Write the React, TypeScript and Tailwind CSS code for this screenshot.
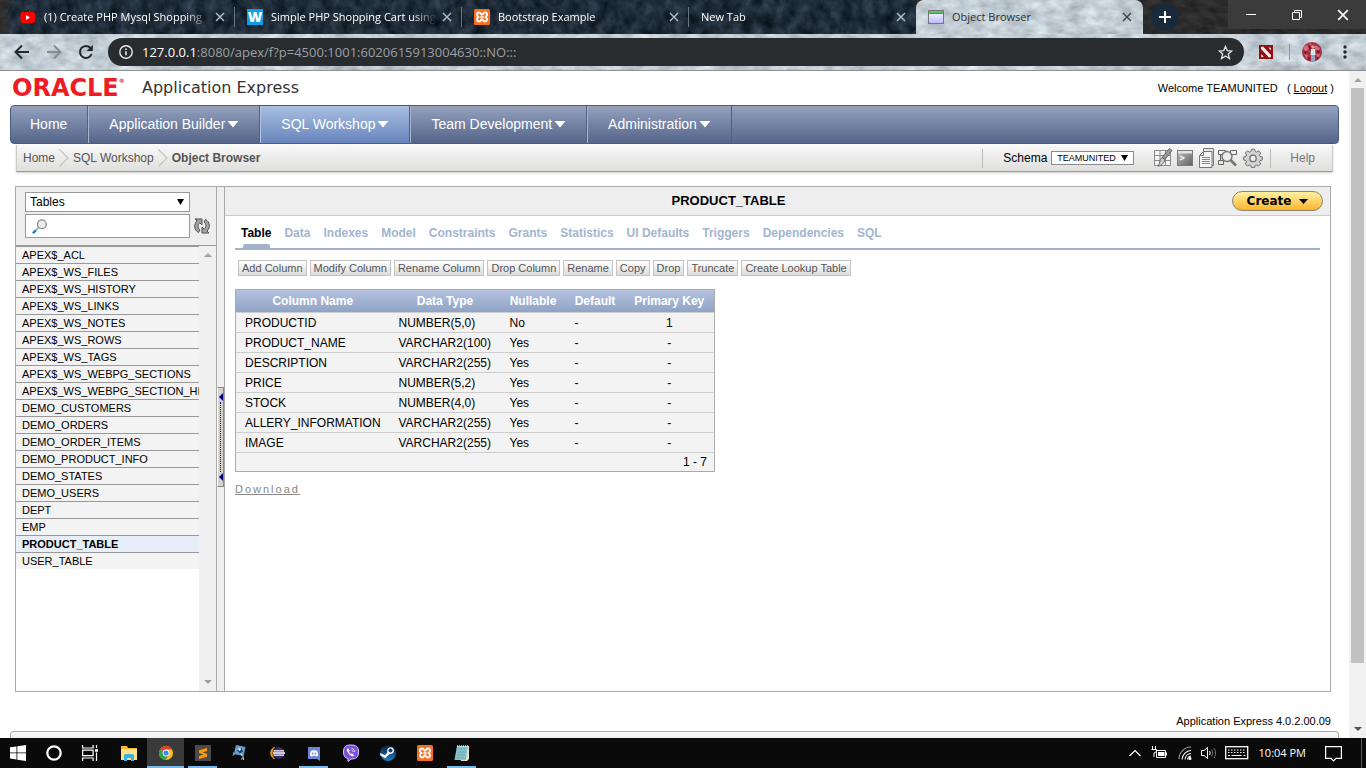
import { useState, type ReactNode } from "react";

type Tone = "stone" | "slate" | "brick";

const toneMatrix: Record<Tone, string> = {
  stone: "0.36 0 0 0 0.58  0.34 0 0 0 0.63  0.32 0 0 0 0.67  0 0 0 0 1",
  slate: "0.26 0 0 0 -0.01  0.28 0 0 0 0.03  0.32 0 0 0 0.06  0 0 0 0 1",
  brick: "0.14 0 0 0 0.1  0.14 0 0 0 0.1  0.14 0 0 0 0.1  0 0 0 0 1",
};

const toneFrequency: Record<Tone, string> = {
  stone: "0.06 0.1",
  slate: "0.09 0.07",
  brick: "0.08 0.15",
};

function Texture({ tone, id }: { tone: Tone; id: string }) {
  return (
    <svg className="pointer-events-none absolute inset-0 h-full w-full" aria-hidden="true">
      <filter id={id} x="0" y="0" width="100%" height="100%" colorInterpolationFilters="sRGB">
        <feTurbulence type="fractalNoise" baseFrequency={toneFrequency[tone]} numOctaves="5" seed="7" />
        <feColorMatrix type="matrix" values={toneMatrix[tone]} />
      </filter>
      <rect width="100%" height="100%" filter={`url(#${id})`} />
    </svg>
  );
}

function Cross({ className, size = 10 }: { className: string; size?: number }) {
  return (
    <svg width={size} height={size} viewBox="0 0 10 10" className={className} aria-hidden="true">
      <path d="M1 1l8 8M9 1l-8 8" stroke="currentColor" strokeWidth="1.4" fill="none" />
    </svg>
  );
}

function XamppIcon() {
  return (
    <svg width="16" height="16" viewBox="0 0 16 16" aria-hidden="true">
      <rect width="16" height="16" rx="1.5" fill="#f37021" />
      <path
        d="M5.6 3.6C3.6 3.2 2.6 4.6 3 6c.2.8.8 1.300 1.400 2C3.600 8.600 3 9.400 3 10.300c0 1.600 1.300 2.300 2.600 2.100C7 12.200 6.900 10.300 8 10.300s1 1.900 2.400 2.100c1.300.2 2.600-.5 2.600-2.100 0-.9-.6-1.700-1.400-2.300.6-.7 1.200-1.200 1.400-2 .4-1.400-.6-2.800-2.600-2.400C9.200 3.900 9.100 5.700 8 5.700S6.800 3.900 5.600 3.600z"
        fill="none"
        stroke="#fff"
        strokeWidth="1.900"
      />
      <path d="M6.300 8h3.400" stroke="#fff" strokeWidth="1.600" />
    </svg>
  );
}

function YoutubeIcon() {
  return (
    <svg width="16" height="16" viewBox="0 0 16 16" aria-hidden="true">
      <rect x="0.500" y="3" width="14.500" height="11" rx="2.500" fill="#f00" />
      <path d="M6 6v5l4-2.500z" fill="#fff" />
    </svg>
  );
}

function WindowIcon() {
  return (
    <svg width="16" height="16" viewBox="0 0 16 16" aria-hidden="true">
      <defs>
        <linearGradient id="winFill" x1="0" y1="0" x2="0" y2="1">
          <stop offset="0" stopColor="#fff" />
          <stop offset="1" stopColor="#b9b7ff" />
        </linearGradient>
      </defs>
      <rect x="0.500" y="1.500" width="15" height="13" fill="url(#winFill)" stroke="#777" />
      <rect x="1" y="2" width="14" height="2" fill="#5fc35f" />
      <path d="M1 4.500h14" stroke="#777" />
    </svg>
  );
}

const browserTabs: { title: string; icon: ReactNode }[] = [
  { title: "(1) Create PHP Mysql Shopping", icon: <YoutubeIcon /> },
  {
    title: "Simple PHP Shopping Cart using",
    icon: (
      <span className="flex size-4 items-center justify-center bg-[#0a9fe8] font-['Open_Sans',sans-serif] text-[14px] leading-4 font-extrabold text-white">
        W
      </span>
    ),
  },
  { title: "Bootstrap Example", icon: <XamppIcon /> },
  { title: "New Tab", icon: null },
];

function TabStrip() {
  return (
    <div className="relative flex h-[34px] shrink-0 bg-[#2a2a2a] pl-2">
      <Texture tone="brick" id="texFrame" />
      <div className="relative flex w-[908px] min-w-0 shrink overflow-hidden rounded-tl-lg rounded-br-lg">
        <Texture tone="slate" id="texTabs" />
        {browserTabs.map((t, i) => (
          <div key={t.title} className="relative flex min-w-0 flex-1 items-center pl-3 text-white">
            {t.icon && <span className="mr-2 shrink-0">{t.icon}</span>}
            <span className="min-w-0 flex-1 overflow-hidden mask-r-from-85% text-[11px] leading-4 font-medium whitespace-nowrap">
              {t.title}
            </span>
            <button aria-label={`Close ${t.title}`} className="mr-[9px] ml-[5px] shrink-0 text-[#b9bfc4]">
              <Cross className="block" />
            </button>
            <span className={i < 3 ? "h-5 w-px bg-[#67727c]" : "h-5 w-px"} />
          </div>
        ))}
      </div>
      <div className="relative flex w-[227px] min-w-0 items-center overflow-hidden rounded-t-lg pl-3 text-[#2b3238]">
        <Texture tone="stone" id="texActive" />
        <span className="relative mr-2 shrink-0">
          <WindowIcon />
        </span>
        <span className="relative min-w-0 flex-1 text-[11px] leading-4 font-medium whitespace-nowrap">Object Browser</span>
        <button aria-label="Close Object Browser" className="relative mr-[11px] shrink-0 text-[#3c4043]">
          <Cross className="block" />
        </button>
      </div>
      <div className="relative flex flex-1 items-start justify-between pl-2">
        <button
          aria-label="New tab"
          className="mt-[3px] flex size-7 items-center justify-center rounded-full bg-[#1b2a3a] text-white"
        >
          <svg width="14" height="14" viewBox="0 0 14 14" aria-hidden="true">
            <path d="M7 1v12M1 7h12" stroke="currentColor" strokeWidth="2" />
          </svg>
        </button>
        <div className="flex h-[29px] bg-[#3b3b3b] text-white">
          <button aria-label="Minimize" className="flex w-[46px] items-center justify-center">
            <svg width="10" height="10" viewBox="0 0 10 10">
              <path d="M0 4.500h10" stroke="currentColor" />
            </svg>
          </button>
          <button aria-label="Restore" className="flex w-[46px] items-center justify-center">
            <svg width="10" height="10" viewBox="0 0 10 10" fill="none" stroke="currentColor">
              <path d="M0.500 2.500h7v7h-7zM2.500 2.500v-2h7v7h-2" />
            </svg>
          </button>
          <button aria-label="Close" className="flex w-[46px] items-center justify-center">
            <Cross className="block" size={12} />
          </button>
        </div>
      </div>
    </div>
  );
}

function AddressBar() {
  return (
    <div className="relative flex h-[37px] shrink-0 items-center border-b border-[#8b9096] pr-[19px] pl-[14px] text-[#23282c]">
      <Texture tone="stone" id="texBar" />
      <div className="relative flex items-center gap-4">
        <button aria-label="Back">
          <svg width="16" height="16" viewBox="0 0 16 16" fill="none" stroke="currentColor" strokeWidth="2">
            <path d="M15 8H2M8 1.500L1.500 8 8 14.500" />
          </svg>
        </button>
        <button aria-label="Forward" className="text-[#858b90]">
          <svg width="16" height="16" viewBox="0 0 16 16" fill="none" stroke="currentColor" strokeWidth="1.800">
            <path d="M1 8h13M8 1.500L14.500 8 8 14.500" />
          </svg>
        </button>
        <button aria-label="Reload">
          <svg width="16" height="16" viewBox="0 0 16 16" fill="none" stroke="currentColor" strokeWidth="2">
            <path d="M13.600 10A6 6 0 1 1 12.500 4" />
            <path d="M14.800 0.800v6.200h-6.200z" fill="currentColor" stroke="none" />
          </svg>
        </button>
      </div>
      <div className="relative ml-[14px] flex h-7 min-w-0 flex-1 items-center rounded-full bg-[#282c2f] px-[11px]">
        <svg width="14" height="14" viewBox="0 0 14 14" fill="none" stroke="#e8eaed" strokeWidth="1.400" aria-hidden="true">
          <circle cx="7" cy="7" r="6.200" />
          <path d="M7 6.200v4M7 3.500v1.500" strokeWidth="1.600" />
        </svg>
        <span className="ml-[9px] flex-1 text-[13px] leading-5 whitespace-nowrap text-[#9aa0a6]">
          <span className="text-white">127.0.0.1</span>:8080/apex/f?p=4500:1001:6020615913004630::NO:::
        </span>
        <button aria-label="Bookmark this page">
          <svg width="15" height="15" viewBox="0 0 16 16" fill="none" stroke="#dfe2e5" strokeWidth="1.400">
            <path d="M8 1.500l1.900 4.500 4.800.4-3.700 3.200 1.200 4.800L8 11.800l-4.200 2.600L5 9.600 1.300 6.400l4.800-.4z" />
          </svg>
        </button>
      </div>
      <svg className="relative ml-[15px]" width="14" height="14" viewBox="0 0 14 14" role="img" aria-label="Extension">
        <rect width="14" height="14" fill="#8f1010" />
        <path d="M2 2l2-.5 8 8.500v2l-2 .5L2 4z" fill="#f4ecec" />
        <path d="M9.500 2.200L12 3l-.5 2.500zM2.300 9l2.500 2.800-2.500.5z" fill="#f4ecec" />
      </svg>
      <span className="relative mr-3 ml-4 h-4 w-px bg-[#8b959c]" />
      <svg className="relative" width="20" height="20" viewBox="0 0 20 20" role="img" aria-label="Profile">
        <defs>
          <clipPath id="avatarClip">
            <circle cx="10" cy="10" r="10" />
          </clipPath>
        </defs>
        <g clipPath="url(#avatarClip)">
          <rect width="20" height="20" fill="#a53044" />
          <path d="M1 5l4-2 2 4-4 3zM13 3l5 3-2 4-3-2zM2 12l4 1-1 4zM14 12l4 0-2 4zM7 1l3 1-2 2z" fill="#d8697a" />
          <path d="M7 3l2 3-2 2zM14 8l4 1-2 2zM2 9l3 1-2 2zM6 15l2 1-1 3zM15 15l2 1-2 2z" fill="#4d1722" />
          <circle cx="11" cy="5" r="1.800" fill="#d9a68c" />
          <path d="M9 7h4l.5 6h-5z" fill="#e2e4ea" />
          <path d="M9 13h4v7H9z" fill="#8ea3c0" />
        </g>
      </svg>
      <button aria-label="Browser menu" className="relative ml-[20px] flex w-[5px] justify-center">
        <svg width="4" height="16" viewBox="0 0 4 16" fill="currentColor">
          <circle cx="2" cy="3" r="1.700" />
          <circle cx="2" cy="8" r="1.700" />
          <circle cx="2" cy="13" r="1.700" />
        </svg>
      </button>
    </div>
  );
}

const navItems = [
  { label: "Home", menu: false },
  { label: "Application Builder", menu: true },
  { label: "SQL Workshop", menu: true },
  { label: "Team Development", menu: true },
  { label: "Administration", menu: true },
];

function MainNav() {
  return (
    <nav className="flex h-[39px] rounded-[4px] border border-[#4a5b83] bg-linear-to-b from-[#94a2bd] to-[#55658a] text-[14px] text-white">
      {navItems.map((n) => (
        <a
          key={n.label}
          href="#"
          className={
            n.label === "SQL Workshop"
              ? "flex items-center border-r border-l border-r-[#4f6086] border-l-[#b6c7e4] bg-linear-to-b from-[#a9bfe0] to-[#6885bd] px-5"
              : n.label === "Home"
                ? "flex items-center border-r border-[#4f6086] pr-5 pl-[19px]"
                : "flex items-center border-r border-l border-r-[#4f6086] border-l-[#a9b5cc] px-5"
          }
        >
          {n.label}
          {n.menu && (
            <svg className="ml-0.5" width="12" height="7" viewBox="0 0 12 7" aria-hidden="true">
              <path d="M0.500 0h11L6 6.500z" fill="#fff" />
            </svg>
          )}
        </a>
      ))}
    </nav>
  );
}

function Chevron() {
  return (
    <svg width="10" height="18" viewBox="0 0 10 18" className="mx-1" aria-hidden="true">
      <path d="M0.500 0.500L9 9 0.500 17.500" fill="none" stroke="#c4c4c4" strokeWidth="1.300" />
    </svg>
  );
}

function ToolIcons() {
  return (
    <div className="flex items-center gap-[3px]">
      <a href="#" aria-label="Object Browser">
        <svg width="20" height="20" viewBox="0 0 20 20" fill="none">
          <path d="M1.500 2.500h16v15h-16z" fill="#f4f4f4" />
          <path d="M1.500 2.500h16v15h-16zM1.500 7.500h16M1.500 12.500h16M7 2.500v15M12.500 2.500v15" stroke="#8a8a8a" />
          <path d="M16.500 0.500l2.500 2-7 9-3-2z" fill="#9a9a9a" stroke="#555" strokeWidth=".8" />
          <path d="M9 9.500l3 2c-1 4-4 6.500-7 6.500 2-2 1.500-7 4-8.500z" fill="#c9c9c9" stroke="#555" strokeWidth=".8" />
        </svg>
      </a>
      <a href="#" aria-label="SQL Commands">
        <svg width="18" height="20" viewBox="0 0 18 20" fill="none">
          <defs>
            <linearGradient id="termFill" x1="0" y1="0" x2="1" y2="1">
              <stop offset="0" stopColor="#c4c4c4" />
              <stop offset="1" stopColor="#5f5f5f" />
            </linearGradient>
          </defs>
          <rect x="1.500" y="2.500" width="15" height="15" fill="url(#termFill)" stroke="#7b7b7b" />
          <rect x="2" y="3" width="14" height="2.500" fill="#e4e4e4" />
          <path d="M4 8l4 2-4 2" stroke="#fff" strokeWidth="1.200" />
        </svg>
      </a>
      <a href="#" aria-label="SQL Scripts" className="ml-0.5">
        <svg width="16" height="20" viewBox="0 0 16 20">
          <path d="M4.500 0.500h10v17h-10z" fill="#e6e6e6" stroke="#777" />
          <path d="M4.500 3.500h8.500v16H0.500V7.500z" fill="#f5f5f5" stroke="#777" />
          <path d="M4.500 3.500v4h-4" fill="none" stroke="#777" />
          <path d="M3 9.500h8M3 11.500h8M3 13.500h8M3 15.500h8" stroke="#888" />
        </svg>
      </a>
      <a href="#" aria-label="Query Builder">
        <svg width="20" height="20" viewBox="0 0 20 20" fill="none">
          <path d="M0.500 2.500h7v4h-7zM12.500 2.500h6v4h-6zM0.500 12.500h5v4h-5zM2.500 6.500v6M7 4.500h5" stroke="#666" />
          <circle cx="9" cy="8.500" r="5" fill="#ececec" stroke="#777" strokeWidth="1.400" />
          <path d="M12.500 12l5.500 5.500" stroke="#777" strokeWidth="2.600" />
        </svg>
      </a>
      <a href="#" aria-label="Utilities" className="ml-0.5">
        <svg width="20" height="20" viewBox="0 0 20 20">
          <path
            d="M8.400 1.200h3.200l.5 2.300 1.400.6 2-1.300 2.200 2.200-1.200 2 .6 1.400 2.200.5v3.100l-2.200.5-.6 1.400 1.200 2-2.200 2.200-2-1.200-1.400.6-.5 2.200H8.400l-.5-2.200-1.400-.6-2 1.200-2.200-2.200 1.200-2-.6-1.400-2.200-.5V8.900l2.200-.5.6-1.400-1.200-2 2.200-2.200 2 1.300 1.400-.6z"
            fill="#d2d2d2"
            stroke="#707070"
          />
          <circle cx="10" cy="10.400" r="3.200" fill="#eee" stroke="#707070" strokeWidth="1.300" />
        </svg>
      </a>
    </div>
  );
}

function Breadcrumbs() {
  return (
    <div className="mx-[6px] mt-px flex h-[27px] items-center border border-t-0 border-[#ccc] border-b-[#999] bg-linear-to-b from-[#f8f8f8] to-[#dfdfdd] text-[12px] text-[#555] shadow-[0_1px_2px_rgba(0,0,0,0.2)]">
      <a href="#" className="ml-[6px]">
        Home
      </a>
      <Chevron />
      <a href="#">SQL Workshop</a>
      <Chevron />
      <span className="font-bold">Object Browser</span>
      <span className="ml-auto h-[19px] w-px bg-[#bbb]" />
      <label htmlFor="schema" className="ml-5 text-black">
        Schema
      </label>
      <span className="relative ml-1 flex">
        <select
          id="schema"
          className="h-[14px] w-[83px] appearance-none border border-[#8a8a8a] bg-white pl-[5px] text-[9px] leading-3 text-black"
        >
          <option>TEAMUNITED</option>
        </select>
        <svg className="pointer-events-none absolute top-1 right-[6px]" width="7" height="6" viewBox="0 0 7 6" aria-hidden="true">
          <path d="M0 0h7L3.500 6z" />
        </svg>
      </span>
      <span className="w-[19px]" />
      <ToolIcons />
      <span className="ml-[7px] h-[19px] w-px bg-[#bbb]" />
      <a href="#" className="mr-[17px] ml-[19px] text-[#777]">
        Help
      </a>
    </div>
  );
}

const objects = [
  "APEX$_ACL",
  "APEX$_WS_FILES",
  "APEX$_WS_HISTORY",
  "APEX$_WS_LINKS",
  "APEX$_WS_NOTES",
  "APEX$_WS_ROWS",
  "APEX$_WS_TAGS",
  "APEX$_WS_WEBPG_SECTIONS",
  "APEX$_WS_WEBPG_SECTION_HISTORY",
  "DEMO_CUSTOMERS",
  "DEMO_ORDERS",
  "DEMO_ORDER_ITEMS",
  "DEMO_PRODUCT_INFO",
  "DEMO_STATES",
  "DEMO_USERS",
  "DEPT",
  "EMP",
  "PRODUCT_TABLE",
  "USER_TABLE",
];

function Arrow({ up, color }: { up?: boolean; color: string }) {
  return (
    <svg width="8" height="4" viewBox="0 0 8 4" aria-hidden="true">
      <path d={up ? "M0 4h8L4 0z" : "M0 0h8L4 4z"} fill={color} />
    </svg>
  );
}

function ObjectList() {
  const [selected, setSelected] = useState("PRODUCT_TABLE");
  return (
    <aside className="flex w-[200px] shrink-0 flex-col bg-[#eee]">
      <div className="flex h-[58px] flex-col pt-[5px] pl-[9px]">
        <span className="relative flex w-[165px]">
          <select
            aria-label="Object type"
            className="h-5 w-full appearance-none border border-[#999] bg-white pl-1 text-[12px] text-black"
          >
            <option>Tables</option>
          </select>
          <svg className="pointer-events-none absolute top-[7px] right-[6px]" width="7" height="6" viewBox="0 0 7 6" aria-hidden="true">
            <path d="M0 0h7L3.500 6z" />
          </svg>
        </span>
        <div className="mt-0.5 flex items-center gap-1">
          <label className="flex h-6 w-[165px] items-center border border-[#999] bg-white pl-[6px]">
            <svg width="17" height="17" viewBox="0 0 17 17" fill="none" aria-hidden="true">
              <path d="M1 16l3.500-3.500" stroke="#2479c4" strokeWidth="2.600" />
              <path d="M4 13l3.500-3.500" stroke="#8fb9dc" strokeWidth="2.200" />
              <circle cx="11" cy="6" r="4.900" fill="#ececec" stroke="#8c8c8c" strokeWidth="1.400" />
            </svg>
            <input aria-label="Search objects" className="w-full min-w-0 px-1 text-[12px] outline-none" />
          </label>
          <button aria-label="Refresh">
            <svg width="16" height="16" viewBox="0 0 16 16" fill="none">
              <path d="M1 1h7v6L5.800 4.800C3.500 6.500 3.500 10 6 12l-1.500 2.500C0 12 -0.500 6.500 3 3z" fill="#a5a5a5" stroke="#4f4f4f" />
              <path d="M15 15H8V9l2.200 2.200C12.500 9.500 12.500 6 10 4l1.500-2.500C16 4 16.500 9.500 13 13z" fill="#a5a5a5" stroke="#4f4f4f" />
            </svg>
          </button>
        </div>
      </div>
      <div className="flex min-h-0 flex-1 border-t border-[#999] bg-white">
        <ul className="min-w-0 flex-1 overflow-hidden text-[11px] leading-4">
          {objects.map((o) => (
            <li key={o}>
              <button
                onClick={() => setSelected(o)}
                className={
                  o === selected
                    ? "block w-full overflow-hidden border-t border-[#999] bg-[#e6eef9] pl-[6px] text-left font-bold whitespace-nowrap"
                    : "block w-full overflow-hidden border-t border-[#999] bg-[#f3f3f3] pl-[6px] text-left whitespace-nowrap"
                }
              >
                {o}
              </button>
            </li>
          ))}
        </ul>
        <div className="flex w-[17px] flex-col items-center justify-between bg-[#f0f0f0] py-[7px]">
          <Arrow up color="#a3a3a3" />
          <Arrow color="#a3a3a3" />
        </div>
      </div>
    </aside>
  );
}

function Splitter() {
  return (
    <div className="flex w-[9px] shrink-0 flex-col border-x border-[#aaa] bg-[#eee] pt-[200px]">
      <div className="flex h-[100px] flex-col items-center justify-between border border-[#888] border-l-white bg-[#d6d3ce] py-[5px]">
        <svg width="4" height="8" viewBox="0 0 4 8" aria-hidden="true">
          <path d="M4 0v8L0 4z" fill="#000080" />
        </svg>
        <span className="h-[70px] border-l border-dotted border-[#000080]" />
        <svg width="4" height="8" viewBox="0 0 4 8" aria-hidden="true">
          <path d="M4 0v8L0 4z" fill="#000080" />
        </svg>
      </div>
    </div>
  );
}

const detailTabs = [
  "Table",
  "Data",
  "Indexes",
  "Model",
  "Constraints",
  "Grants",
  "Statistics",
  "UI Defaults",
  "Triggers",
  "Dependencies",
  "SQL",
];

const actions = [
  "Add Column",
  "Modify Column",
  "Rename Column",
  "Drop Column",
  "Rename",
  "Copy",
  "Drop",
  "Truncate",
  "Create Lookup Table",
];

const columns = [
  ["PRODUCTID", "NUMBER(5,0)", "No", "-", "1"],
  ["PRODUCT_NAME", "VARCHAR2(100)", "Yes", "-", "-"],
  ["DESCRIPTION", "VARCHAR2(255)", "Yes", "-", "-"],
  ["PRICE", "NUMBER(5,2)", "Yes", "-", "-"],
  ["STOCK", "NUMBER(4,0)", "Yes", "-", "-"],
  ["ALLERY_INFORMATION", "VARCHAR2(255)", "Yes", "-", "-"],
  ["IMAGE", "VARCHAR2(255)", "Yes", "-", "-"],
];

function ColumnTable() {
  return (
    <table className="w-[480px] table-fixed border-collapse border border-[#aaa] bg-[#f3f3f3] text-[12px] leading-[17px]">
      <colgroup>
        <col className="w-[154px]" />
        <col className="w-[111px]" />
        <col className="w-[65px]" />
        <col className="w-[59px]" />
        <col />
      </colgroup>
      <thead>
        <tr className="h-[23px] bg-linear-to-b from-[#b4c2de] to-[#8fa2c4] text-white">
          {["Column Name", "Data Type", "Nullable", "Default", "Primary Key"].map((h) => (
            <th key={h} className="p-0 font-bold">
              {h}
            </th>
          ))}
        </tr>
      </thead>
      <tbody>
        {columns.map((row) => (
          <tr key={row[0]} className="h-5 border-t border-b border-[#ccc]">
            {row.map((cell, i) => (
              <td key={i} className={i === 4 ? "px-0 pt-0.5 pb-0 text-center" : "pt-0.5 pr-0 pb-0 pl-[9px]"}>
                {cell}
              </td>
            ))}
          </tr>
        ))}
      </tbody>
      <tfoot>
        <tr>
          <td colSpan={5} className="py-0 pr-[7px] text-right leading-[18px]">
            1 - 7
          </td>
        </tr>
      </tfoot>
    </table>
  );
}

function DetailPane() {
  const [tab, setTab] = useState("Table");
  return (
    <section className="min-w-0 flex-1 bg-white">
      <header className="flex h-[29px] items-center border-b border-[#ccc] bg-[#eee] pr-[7px]">
        <h1 className="flex-1 text-center text-[13px] font-bold">PRODUCT_TABLE</h1>
        <button className="flex h-5 w-[91px] items-center justify-center gap-2 rounded-full border border-[#8c8672] bg-linear-to-b from-[#fff1a0] to-[#fdb515] font-['DejaVu_Sans',sans-serif] text-[12px] font-bold">
          Create
          <svg width="9" height="5" viewBox="0 0 9 5" aria-hidden="true">
            <path d="M0 0h9L4.500 5z" />
          </svg>
        </button>
      </header>
      <div className="px-[10px]">
        <div role="tablist" className="flex h-[34px] gap-[13px] border-b-2 border-[#a3b2cc] pl-[6px] text-[12px] font-bold">
          {detailTabs.map((t) => (
            <button
              key={t}
              role="tab"
              aria-selected={t === tab}
              onClick={() => setTab(t)}
              className={
                t === tab
                  ? "flex flex-col items-center justify-between pt-2 leading-[18px] text-black"
                  : "flex flex-col items-center justify-between pt-2 leading-[18px] text-[#a3b5cf]"
              }
            >
              {t}
              {t === tab && <span className="h-1 w-[27px] rounded-t-[2px] bg-[#a3b2cc]" />}
            </button>
          ))}
        </div>
        <div className="mt-[10px] flex gap-[3px] pl-[3px] text-[11px] text-[#555]">
          {actions.map((a) => (
            <button
              key={a}
              className="h-4 border border-[#c4c4c4] bg-linear-to-b from-white to-[#dcdcdc] px-[3px] leading-[14px] whitespace-nowrap"
            >
              {a}
            </button>
          ))}
        </div>
        <div className="mt-[13px]">
          <ColumnTable />
        </div>
        <a href="#" className="mt-[10px] inline-block text-[11px] leading-[14px] tracking-[2px] text-[#888] underline">
          Download
        </a>
      </div>
    </section>
  );
}

function Page() {
  return (
    <div className="flex min-h-0 flex-1 bg-white text-black">
      <main className="flex min-w-0 flex-1 flex-col pr-[10px] pl-[10px] font-['Liberation_Sans',Arial,sans-serif]">
        <div className="flex h-[34px] shrink-0 items-center">
          <span className="ml-0.5 flex w-[130px] items-start font-['DejaVu_Sans',sans-serif] text-[24px] leading-[30px] font-bold text-[#ee1c25]">
            ORACLE<span className="mt-1 text-[6px] leading-[8px]">®</span>
          </span>
          <span className="font-['DejaVu_Sans',sans-serif] text-[16px] text-[#333]">Application Express</span>
          <span className="mr-[5px] ml-auto text-[11px] whitespace-pre">
            Welcome TEAMUNITED{"   ( "}
            <a href="#" className="underline">
              Logout
            </a>
            {" )"}
          </span>
        </div>
        <MainNav />
        <Breadcrumbs />
        <div className="mx-[5px] mt-[14px] mr-2 flex min-h-0 flex-1 border border-[#aaa]">
          <ObjectList />
          <Splitter />
          <DetailPane />
        </div>
        <footer className="shrink-0">
          <p className="mt-[21px] mr-2 text-right text-[11px] leading-4">Application Express 4.0.2.00.09</p>
          <div className="mt-0.5 h-[7px] rounded-t-[4px] border border-b-0 border-[#aaa] bg-linear-to-b from-[#fafafa] to-[#eee]" />
        </footer>
      </main>
      <div className="flex w-[17px] shrink-0 flex-col items-center bg-[#f1f1f1] py-[7px]">
        <Arrow up color="#a3a3a3" />
        <div className="mt-[6px] w-[13px] flex-[575] bg-[#c1c1c1]" />
        <div className="flex-[64]" />
        <Arrow color="#505050" />
      </div>
    </div>
  );
}

const svg20 = { width: 18, height: 18, viewBox: "0 0 18 18", "aria-hidden": true } as const;

const taskIcons: { name: string; open?: boolean; icon: ReactNode }[] = [
  {
    name: "File Explorer",
    icon: (
      <svg {...svg20}>
        <path d="M1 2h6l1 2h9v3H1z" fill="#f5b82e" />
        <path d="M1 5h16v11H1z" fill="#fde08a" />
        <path d="M4 17v-5a2 2 0 0 1 2-2h6a2 2 0 0 1 2 2v5h-3v-3H7v3z" fill="#38b0e8" />
      </svg>
    ),
  },
  {
    name: "Chrome",
    open: true,
    icon: (
      <svg {...svg20}>
        <circle cx="9" cy="9" r="7" fill="#fbc116" />
        <path d="M9 9L2.900 5.500A7 7 0 0 1 15.100 5.500H9z" fill="#e33b2e" />
        <path d="M9 9L2.900 5.500A7 7 0 0 0 8.500 16l3.500-5.500z" fill="#2ba24c" />
        <circle cx="9" cy="9" r="3.400" fill="#fff" />
        <circle cx="9" cy="9" r="2.600" fill="#4285f4" />
      </svg>
    ),
  },
  {
    name: "Sublime Text",
    open: true,
    icon: (
      <svg {...svg20}>
        <rect x="1" y="1" width="16" height="16" fill="#4a4a4a" />
        <path d="M13 4v3L8.500 8.400 13 9.800v3L5 15v-3l4.500-1.500L5 9V6.300z" fill="#ff9800" />
      </svg>
    ),
  },
  {
    name: "Design Tool",
    icon: (
      <svg {...svg20}>
        <path d="M5 1l9.500 2-2 9-9.500-2z" fill="#6a9fd4" />
        <path d="M1.500 12l1-4.500 2 2.500z" fill="#6a9fd4" />
        <path d="M6 6.500l4.500-2.500 1.500 3.500-3 2z" fill="#24405f" />
        <path d="M7 5l2-1 1 1.500-1.500 1.500z" fill="#fff" />
        <path d="M9.500 9.500l2.500 3 .5 3.500M11.500 13.500l-1 2" stroke="#dde6ee" fill="none" />
      </svg>
    ),
  },
  {
    name: "Eclipse",
    icon: (
      <svg {...svg20}>
        <path d="M7 3C1 4.500 1 13.500 7 15 3.500 12.500 3.500 5.500 7 3z" fill="#f7941e" stroke="#f7941e" strokeWidth=".5" />
        <circle cx="10.800" cy="9" r="6" fill="#332a66" />
        <path d="M5.500 6.800h10.500M5 9h12M5.500 11.200h10.500" stroke="#fff" strokeWidth="1.300" />
      </svg>
    ),
  },
  {
    name: "Discord",
    open: true,
    icon: (
      <svg {...svg20}>
        <path d="M3 3h12v14l-3-2H3z" fill="#6f85d5" />
        <path d="M5 11.500c0-2 .5-4 1.200-4.800C7.500 6 10.500 6 11.800 6.700c.7.800 1.200 2.800 1.200 4.800-.8.800-1.600 1-2.200 1l-.5-.8H7.700l-.5.8c-.6 0-1.400-.2-2.200-1z" fill="#fff" />
        <circle cx="7.600" cy="9.500" r=".9" fill="#6f85d5" />
        <circle cx="10.400" cy="9.500" r=".9" fill="#6f85d5" />
      </svg>
    ),
  },
  {
    name: "Viber",
    icon: (
      <svg {...svg20}>
        <path d="M9 1c5 0 7.500 1.500 7.500 7S14 15 9 15l-3 2.500V14.500C3 14 1.500 12 1.500 8 1.500 2.500 4 1 9 1z" fill="#7d51e0" stroke="#d9ccff" />
        <path d="M5.500 4.500c-1 .7-1 2 .6 4.300s3.600 3.600 4.800 3.400c1-.4 1.300-1.300.6-1.800l-1.500-1-1 .7C8 9.500 7.200 8.500 7 7.500l.8-.8-1-1.700c-.4-.6-.8-.8-1.300-.5z" fill="#fff" />
        <path d="M9.500 4.500c2 .2 3 1.500 3.200 3.500M9.500 6.200c1 .1 1.500.8 1.600 1.600" fill="none" stroke="#fff" strokeWidth=".8" />
      </svg>
    ),
  },
  {
    name: "Steam",
    icon: (
      <svg {...svg20}>
        <defs>
          <linearGradient id="steamFill" x1="0" y1="0" x2="0" y2="1">
            <stop offset="0" stopColor="#0b1b38" />
            <stop offset="1" stopColor="#1a7fc0" />
          </linearGradient>
        </defs>
        <circle cx="9" cy="9" r="8" fill="url(#steamFill)" />
        <circle cx="11.500" cy="6.500" r="2.700" fill="none" stroke="#fff" strokeWidth="1.300" />
        <path d="M1 9l5 2.200 3-3.500 2.500 1.800-3.500 2.700a2 2 0 0 1-3.500 1L1.500 11.500z" fill="#fff" />
      </svg>
    ),
  },
  { name: "XAMPP", icon: <XamppIcon /> },
  {
    name: "Notepad",
    open: true,
    icon: (
      <svg {...svg20}>
        <path d="M4 2h12v13l-2 2H8z" fill="#e9dfc4" />
        <path d="M4 2h11l-2 14H1.500z" fill="#8cc3cf" />
        <path d="M5 5h8M4.500 8h8M4 11h8M3.500 14h8" stroke="#5c98a8" strokeWidth=".7" />
        <path d="M4 2h11.500" stroke="#e8eef0" strokeWidth="1.600" strokeDasharray="1 1" />
      </svg>
    ),
  },
];

function Taskbar() {
  return (
    <div className="flex h-[30px] shrink-0 items-stretch bg-[#0a0a0a] text-white">
      <button aria-label="Start" className="flex w-9 items-center justify-center">
        <svg width="16" height="16" viewBox="0 0 16 16" fill="#fff">
          <path d="M0 2.300L6.500 1.400v6.100H0zM7.300 1.300L16 0v7.500H7.300zM0 8.300h6.500v6.200L0 13.600zM7.300 8.300H16V16l-8.700-1.300z" />
        </svg>
      </button>
      <button aria-label="Cortana" className="flex w-9 items-center justify-center">
        <svg width="16" height="16" viewBox="0 0 16 16" fill="none" stroke="#fff" strokeWidth="2.200">
          <circle cx="8" cy="8" r="6.700" />
        </svg>
      </button>
      <button aria-label="Task View" className="mr-0.5 flex w-9 items-center justify-center">
        <svg width="16" height="16" viewBox="0 0 16 16" fill="none" stroke="#fff" strokeWidth="1.200">
          <path d="M0.600 0v3h10.500V0M0.600 16v-3h10.500v3M0.600 5.200h10.500v5.400H0.600zM14.500 0v3M14.500 7.500v8.500" />
          <path d="M13 4.200h3v2.500h-3z" fill="#fff" stroke="none" />
        </svg>
      </button>
      {taskIcons.map((t) => (
        <button
          key={t.name}
          aria-label={t.name}
          className={
            t.name === "Chrome"
              ? "relative flex w-[37px] items-center justify-center bg-[#3a3a3a]"
              : "relative flex w-[37px] items-center justify-center"
          }
        >
          {t.icon}
          {t.open && (
            <span
              className={
                t.name === "Chrome"
                  ? "absolute inset-x-0 bottom-0 h-0.5 bg-[#76b9ed]"
                  : "absolute inset-x-1 bottom-0 h-0.5 bg-[#76b9ed]"
              }
            />
          )}
        </button>
      ))}
      <div className="ml-auto flex items-center">
        <svg width="12" height="8" viewBox="0 0 12 8" fill="none" stroke="#fff" strokeWidth="1.200" aria-label="Show hidden icons">
          <path d="M0.500 7L6 1.500 11.500 7" />
        </svg>
        <svg className="ml-[10px]" width="17" height="14" viewBox="0 0 17 14" fill="none" stroke="#fff" aria-label="Battery">
          <path d="M5.500 4.500h9v7h-9zM15.500 6.500v3" />
          <path d="M7 6h6.500v4H7z" fill="#fff" stroke="none" />
          <path d="M1.500 0v3M4.500 0v3M0.500 3.500h5v2l-2.500 1.500v4" />
        </svg>
        <svg className="ml-[10px]" width="14" height="14" viewBox="0 0 14 14" fill="none" stroke="#fff" strokeWidth="1.100" aria-label="Wi-Fi">
          <path d="M1 13A12 12 0 0 1 13 1" stroke="#9a9a9a" />
          <path d="M4 13.500A9.500 9.500 0 0 1 13 4.500M7 13.500A6.500 6.500 0 0 1 13 7.500M9.500 13.500A4 4 0 0 1 13 10" />
          <circle cx="12" cy="12.500" r="1" fill="#fff" />
        </svg>
        <svg className="ml-[9px]" width="16" height="14" viewBox="0 0 16 14" fill="none" stroke="#fff" aria-label="Volume">
          <path d="M0.500 4.500h2.500l3.500-3v11l-3.500-3H0.500zM8.500 5c.8 1.300.8 2.700 0 4" />
          <path d="M10.500 3.500c1.500 2.300 1.500 4.700 0 7M13 2c2 3.300 2 6.700 0 10" stroke="#777" />
        </svg>
        <svg className="ml-2" width="24" height="14" viewBox="0 0 24 14" fill="none" stroke="#fff" aria-label="Keyboard">
          <rect x="0.700" y="0.700" width="22" height="12" strokeWidth="1.300" />
          <path d="M3 4h18M3 6.500h18" strokeDasharray="1.500 1.500" />
          <path d="M3 9.500h2M6.500 9.500h10M18.500 9.500h2" />
        </svg>
        <time className="ml-[10px] text-[11px] leading-4 font-medium whitespace-nowrap">10:04 PM</time>
        <svg className="ml-[19px]" width="17" height="17" viewBox="0 0 17 17" fill="none" stroke="#fff" strokeWidth="1.200" aria-label="Notifications">
          <path d="M0.600 1.600h15.800v11.800h-5.400l-2.500 2.500-2.500-2.500H0.600z" />
        </svg>
        <span className="mr-1 ml-[19px] h-[30px] w-px bg-[#555]" />
      </div>
    </div>
  );
}

export default function App() {
  return (
    <div className="flex h-screen flex-col overflow-hidden font-['Open_Sans','Noto_Sans',sans-serif]">
      <TabStrip />
      <AddressBar />
      <Page />
      <Taskbar />
    </div>
  );
}
